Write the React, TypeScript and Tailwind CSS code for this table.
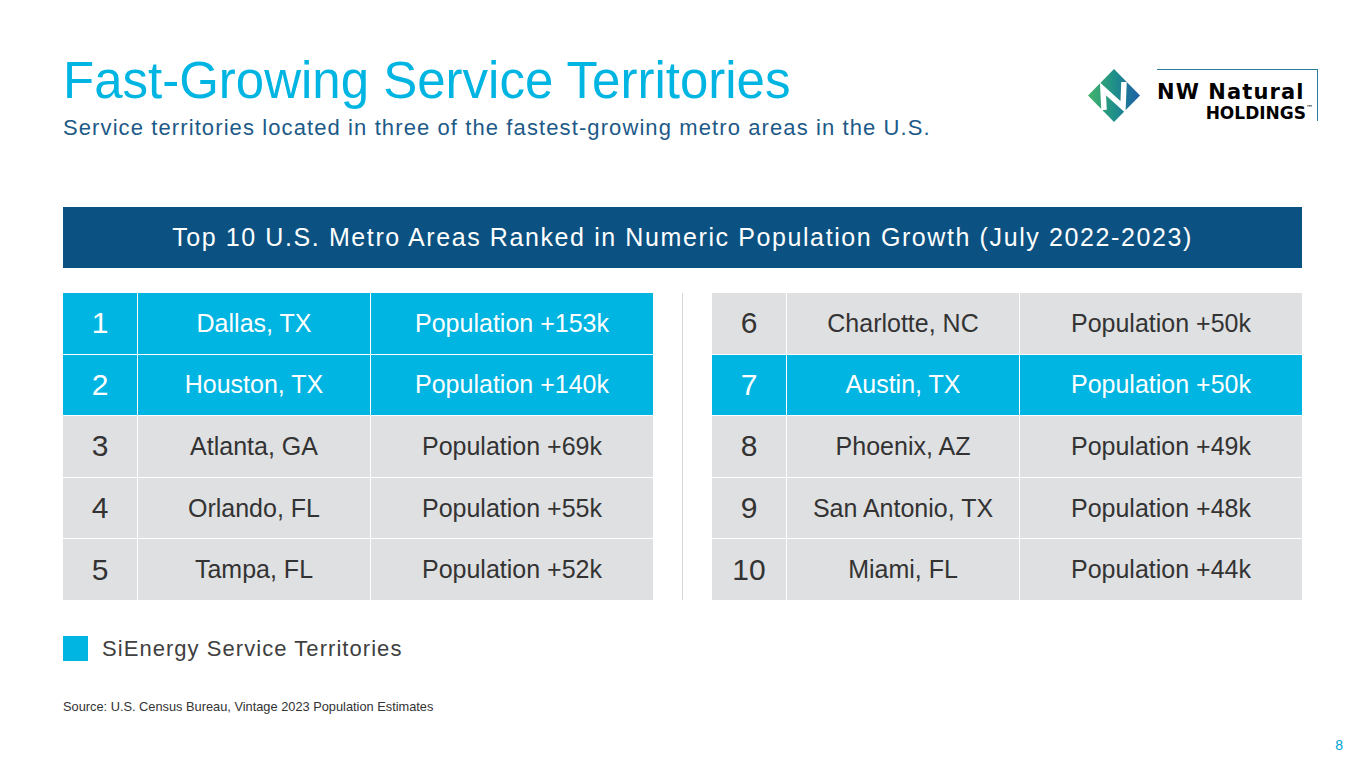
import React from "react";

type Row = { n: number; city: string; pop: string; hi: boolean };

const left: Row[] = [
  { n: 1, city: "Dallas, TX", pop: "Population +153k", hi: true },
  { n: 2, city: "Houston, TX", pop: "Population +140k", hi: true },
  { n: 3, city: "Atlanta, GA", pop: "Population +69k", hi: false },
  { n: 4, city: "Orlando, FL", pop: "Population +55k", hi: false },
  { n: 5, city: "Tampa, FL", pop: "Population +52k", hi: false },
];

const right: Row[] = [
  { n: 6, city: "Charlotte, NC", pop: "Population +50k", hi: false },
  { n: 7, city: "Austin, TX", pop: "Population +50k", hi: true },
  { n: 8, city: "Phoenix, AZ", pop: "Population +49k", hi: false },
  { n: 9, city: "San Antonio, TX", pop: "Population +48k", hi: false },
  { n: 10, city: "Miami, FL", pop: "Population +44k", hi: false },
];

function Table({ rows }: { rows: Row[] }) {
  return (
    <div className="grid grid-cols-[74px_232px_282px] grid-rows-[repeat(5,minmax(0,1fr))] h-[307px] w-[590px] gap-px bg-white">
      {rows.map((r) => {
        const cell = r.hi ? "bg-[#00b5e2] text-white" : "bg-[#dfe0e2] text-[#333333]";
        return (
          <React.Fragment key={r.n}>
            <div className={`${cell} flex items-center justify-center text-[30px] leading-none`}>{r.n}</div>
            <div className={`${cell} flex items-center justify-center text-[25px] leading-none`}>{r.city}</div>
            <div className={`${cell} flex items-center justify-center text-[25px] leading-none`}>{r.pop}</div>
          </React.Fragment>
        );
      })}
    </div>
  );
}

function Diamond() {
  return (
    <svg width="52" height="53" viewBox="0 0 52 53">
      <defs>
        <linearGradient id="dg" x1="0" y1="0" x2="1" y2="0">
          <stop offset="0" stopColor="#45b36b" />
          <stop offset="0.5" stopColor="#1f9088" />
          <stop offset="1" stopColor="#1c5ea8" />
        </linearGradient>
      </defs>
      <polygon points="26,0 52,26.5 26,53 0,26.5" fill="url(#dg)" />
      <path d="M16 41 L15 20 L35 38 L36 13" fill="none" stroke="#ffffff" strokeWidth="5.5" strokeLinejoin="miter" />
    </svg>
  );
}

export default function App() {
  return (
    <div className="w-[1365px] h-[768px] bg-white flex flex-col px-[63px] pt-[55px] font-['Liberation_Sans',Arial,sans-serif] overflow-hidden">
      <div className="flex justify-between items-start">
        <div className="flex flex-col">
          <h1 className="text-[51px] leading-none text-[#00b5e2] font-normal">Fast-Growing Service Territories</h1>
          <p className="mt-[11px] text-[22px] leading-none tracking-[1.1px] text-[#1d5a88]">
            Service territories located in three of the fastest-growing metro areas in the U.S.
          </p>
        </div>
        <div className="flex items-start mt-[14px] -mr-[16px]">
          <Diamond />
          <div className="ml-[17px] w-[161px] h-[52px] border-t border-r border-[#2a7f9b] font-['DejaVu_Sans',sans-serif] font-bold text-black flex flex-col">
            <div className="mt-[12px] text-[21px] leading-none tracking-[1.1px]">NW Natural</div>
            <div className="mt-[2px] text-[17px] leading-none text-right pr-[4px]">
              HOLDINGS<span className="text-[7px] align-top font-normal">™</span>
            </div>
          </div>
        </div>
      </div>

      <div className="mt-[68px] h-[61px] bg-[#0b5282] flex items-center justify-center text-white text-[25px] leading-none tracking-[1.6px]">
        Top 10 U.S. Metro Areas Ranked in Numeric Population Growth (July 2022-2023)
      </div>

      <div className="mt-[25px] flex">
        <Table rows={left} />
        <div className="w-[59px] flex justify-center">
          <div className="w-px h-full bg-[#d6d6d6]" />
        </div>
        <Table rows={right} />
      </div>

      <div className="mt-[36px] flex items-center gap-[14px]">
        <div className="w-[25px] h-[25px] bg-[#00b5e2]" />
        <span className="text-[22px] leading-none tracking-[1.05px] text-[#404040]">SiEnergy Service Territories</span>
      </div>

      <div className="mt-[40px] text-[12.8px] leading-none text-[#333333]">
        Source: U.S. Census Bureau, Vintage 2023 Population Estimates
      </div>

      <div className="mt-[24px] -mr-[41px] flex justify-end">
        <span className="text-[14px] leading-none text-[#00a3d4]">8</span>
      </div>
    </div>
  );
}
